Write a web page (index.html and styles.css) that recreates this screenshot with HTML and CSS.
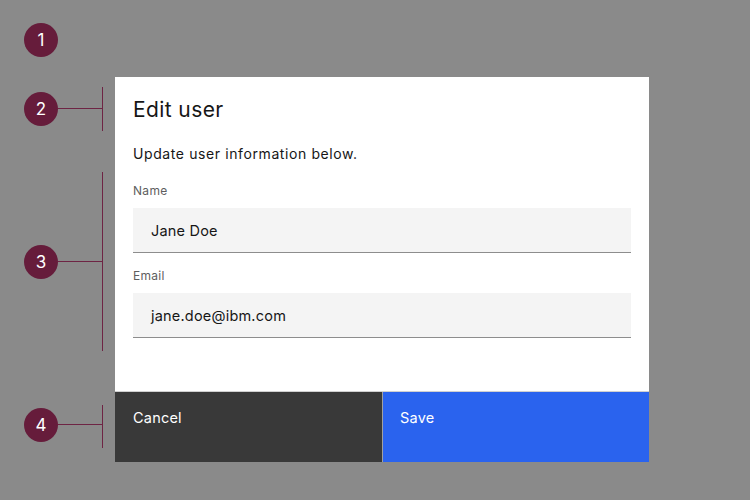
FILE: index.html
```
<!DOCTYPE html>
<html>
<head>
<meta charset="utf-8">
<link rel="stylesheet" href="styles.css">
</head>
<body>
<div class="stage">
  <div class="marker m1"><span class="dot">1</span></div>
  <div class="marker m2"><span class="dot">2</span><span class="lead"></span><span class="bracket"></span></div>
  <div class="marker m3"><span class="dot">3</span><span class="lead"></span><span class="bracket"></span></div>
  <div class="marker m4"><span class="dot">4</span><span class="lead"></span><span class="bracket"></span></div>

  <div class="modal">
    <div class="modal-body">
      <h2 class="title">Edit user</h2>
      <p class="subtitle">Update user information below.</p>
      <div class="field">
        <label class="label">Name</label>
        <div class="input">Jane Doe</div>
      </div>
      <div class="field">
        <label class="label">Email</label>
        <div class="input">jane.doe@ibm.com</div>
      </div>
    </div>
    <div class="footer">
      <button class="btn secondary">Cancel</button>
      <button class="btn primary">Save</button>
    </div>
  </div>
</div>
</body>
</html>
```
FILE: styles.css
```
* { box-sizing: border-box; }
html, body { margin: 0; padding: 0; }
body {
  width: 750px;
  height: 500px;
  background: #8a8a8a;
  font-family: Inter, "Noto Sans", "Liberation Sans", sans-serif;
  overflow: hidden;
}
.stage {
  position: relative;
  width: 750px;
  height: 500px;
  padding: 77px 0 0 115px;
}
.modal {
  width: 534px;
  height: 385px;
  background: #ffffff;
  display: flex;
  flex-direction: column;
}
.modal-body {
  flex: 1;
  padding: 19px 18px 0 18px;
}
.title {
  margin: 0;
  font-size: 21px;
  line-height: 28px;
  font-weight: 400;
  letter-spacing: 0.4px;
  color: #161616;
}
.subtitle {
  margin: 20px 0 0 0;
  font-size: 14px;
  line-height: 20px;
  letter-spacing: 0.6px;
  color: #161616;
}
.field { margin-top: 19px; }
.field + .field { margin-top: 15px; }
.label {
  display: block;
  font-size: 12px;
  line-height: 16px;
  color: #5e5e5e;
  letter-spacing: 0.3px;
}
.input {
  margin-top: 9px;
  height: 45px;
  background: #f4f4f4;
  border-bottom: 1px solid #8d8d8d;
  padding: 0 18px;
  display: flex;
  align-items: center;
  font-size: 14.5px;
  letter-spacing: 0.2px;
  color: #161616;
}
.footer {
  height: 71px;
  display: flex;
  border-top: 1px solid #d0d0d0;
}
.btn {
  flex: 1;
  border: none;
  margin: 0;
  text-align: left;
  vertical-align: top;
  display: flex;
  align-items: flex-start;
  padding: 16px 18px 0 18px;
  font-family: inherit;
  font-size: 14.5px;
  line-height: 20px;
  letter-spacing: 0.2px;
  color: #ffffff;
}
.secondary {
  background: #393939;
  border-right: 1px solid #a0a0a0;
}
.primary {
  background: #2a63ee;
  padding-left: 17px;
}
.marker {
  position: absolute;
  left: 24px;
}
.dot {
  position: absolute;
  left: 0;
  top: 0;
  width: 34px;
  height: 34px;
  border-radius: 50%;
  background: #661c3b;
  color: #ffffff;
  font-size: 17px;
  display: flex;
  align-items: center;
  justify-content: center;
}
.lead {
  position: absolute;
  left: 34px;
  top: 16px;
  width: 44px;
  height: 1px;
  background: #6e2444;
}
.bracket {
  position: absolute;
  left: 78px;
  width: 1px;
  background: #6e2444;
}
.m1 { top: 23px; }
.m2 { top: 92px; }
.m2 .bracket { top: -5px; height: 44px; }
.m3 { top: 245px; }
.m3 .bracket { top: -73px; height: 179px; }
.m4 { top: 408px; }
.m4 .bracket { top: -3px; height: 43px; }
```
